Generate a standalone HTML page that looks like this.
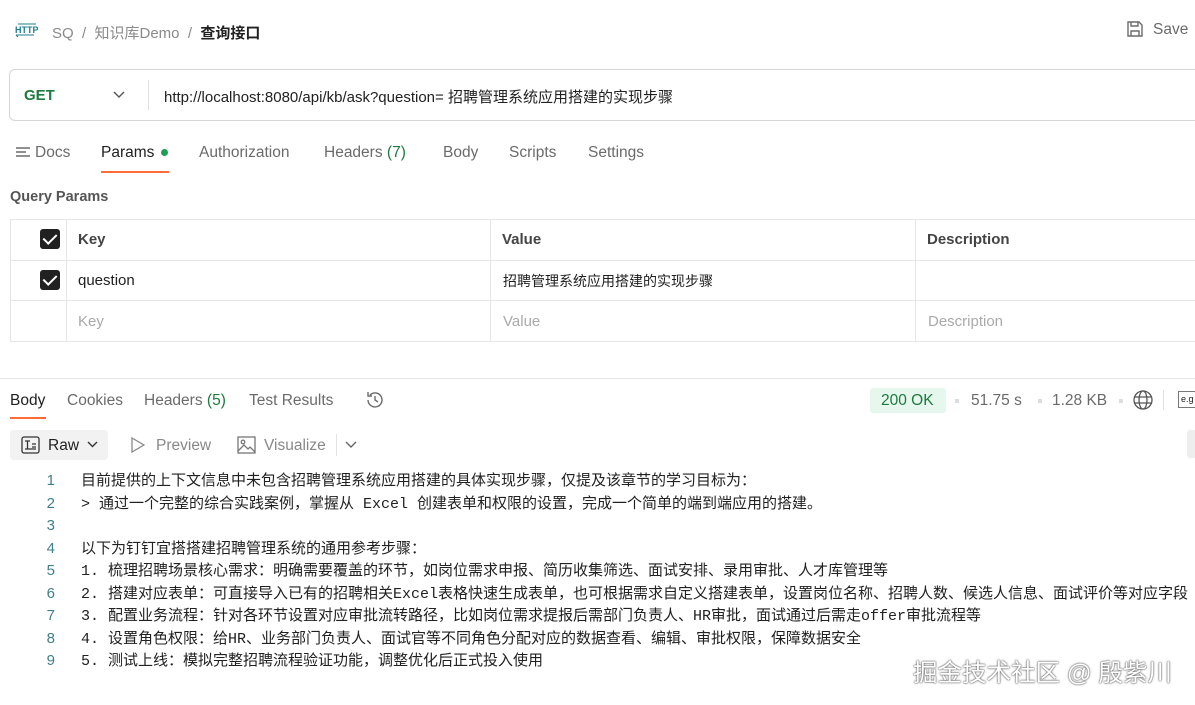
<!DOCTYPE html><html><head><meta charset="utf-8"><style>
*{box-sizing:border-box;margin:0;padding:0}
body{width:1195px;height:705px;overflow:hidden;background:#fff;font-family:"Liberation Sans","Noto Sans CJK SC",sans-serif;color:#212121;position:relative;font-size:15px}
.a{position:absolute;white-space:nowrap}
.g{color:#6b6b6b}
.cell{position:absolute;border:1px solid #e6e6e6}
.cb{position:absolute;width:20px;height:20px;background:#212121;border-radius:3px}
.cb:after{content:"";position:absolute;left:6px;top:2px;width:6px;height:11px;border:solid #fff;border-width:0 2.5px 2.5px 0;transform:rotate(45deg)}
.code{position:absolute;left:0;top:470px;font-family:"Liberation Mono","Noto Sans CJK SC",monospace;font-size:15px;line-height:22.5px}
.code div{white-space:pre;height:22.5px;overflow:visible}
.code span{display:inline-block;width:81px;text-align:right;color:#3f7f8a;padding-right:26px;font-family:"Liberation Sans",sans-serif}
</style></head><body>
<svg class="a" style="left:14px;top:21px" width="24" height="18" viewBox="0 0 24 18"><text x="1" y="12" font-size="9" font-family="Liberation Sans" fill="#1f7f8a" font-weight="bold">HTTP</text><path d="M2 14h18M4 16l-2-2" stroke="#1f7f8a" fill="none"/><path d="M4 3h18" stroke="#1f7f8a"/></svg>
<div class="a g" style="left:52px;top:22px;font-size:15px;color:#8a8a8a">SQ &nbsp;/&nbsp; 知识库Demo &nbsp;/&nbsp; <b style="color:#212121">查询接口</b></div>
<svg class="a" style="left:1126px;top:20px" width="18" height="18" viewBox="0 0 18 18" fill="none" stroke="#6b6b6b" stroke-width="1.4"><path d="M2 2h11l3 3v11H2z"/><path d="M5 2v4h7V2M5 16v-5h8v5"/></svg>
<div class="a g" style="left:1153px;top:21px;font-size:15.5px">Save</div>
<div class="a" style="left:9px;top:69px;width:1200px;height:52px;border:1px solid #d6d6d6;border-radius:6px"></div>
<div class="a" style="left:24px;top:87px;color:#1e7a3e;font-weight:bold;font-size:15px">GET</div>
<svg class="a" style="left:113px;top:91px" width="12" height="8"><path d="M1 1l5 5 5-5" stroke="#555" fill="none" stroke-width="1.4"/></svg>
<div class="a" style="left:148px;top:80px;width:1px;height:30px;background:#e2e2e2"></div>
<div class="a" style="left:164px;top:86px">http://localhost:8080/api/kb/ask?question= 招聘管理系统应用搭建的实现步骤</div>
<svg class="a" style="left:16px;top:147px" width="14" height="12"><path d="M0 1h14M0 5h10M0 9h14" stroke="#6b6b6b" stroke-width="1.4"/></svg>
<div class="a g" style="left:35px;top:144px;font-size:15.5px">Docs</div>
<div class="a" style="left:101px;top:144px;font-size:15.5px">Params</div>
<div class="a" style="left:161px;top:149px;width:7px;height:7px;border-radius:50%;background:#1f9d55"></div>
<div class="a" style="left:101px;top:171px;width:68px;height:2px;background:#ff6c37"></div>
<div class="a g" style="left:199px;top:144px;font-size:15.5px">Authorization</div>
<div class="a g" style="left:324px;top:144px;font-size:15.5px">Headers <span style="color:#1e7a3e">(7)</span></div>
<div class="a g" style="left:443px;top:144px;font-size:15.5px">Body</div>
<div class="a g" style="left:509px;top:144px;font-size:15.5px">Scripts</div>
<div class="a g" style="left:588px;top:144px;font-size:15.5px">Settings</div>
<div class="a" style="left:10px;top:189px;font-weight:bold;color:#555;font-size:14.5px">Query Params</div>
<div class="cell" style="left:10px;top:219px;width:57px;height:42px"></div>
<div class="cell" style="left:66px;top:219px;width:425px;height:42px"></div>
<div class="cell" style="left:490px;top:219px;width:426px;height:42px"></div>
<div class="cell" style="left:915px;top:219px;width:290px;height:42px"></div>
<div class="cell" style="left:10px;top:260px;width:57px;height:41px"></div>
<div class="cell" style="left:66px;top:260px;width:425px;height:41px"></div>
<div class="cell" style="left:490px;top:260px;width:426px;height:41px"></div>
<div class="cell" style="left:915px;top:260px;width:290px;height:41px"></div>
<div class="cell" style="left:10px;top:300px;width:57px;height:42px"></div>
<div class="cell" style="left:66px;top:300px;width:425px;height:42px"></div>
<div class="cell" style="left:490px;top:300px;width:426px;height:42px"></div>
<div class="cell" style="left:915px;top:300px;width:290px;height:42px"></div>
<div class="cb" style="left:40px;top:229px"></div><div class="cb" style="left:40px;top:270px"></div>
<div class="a" style="left:78px;top:231px;font-weight:bold;color:#444">Key</div>
<div class="a" style="left:502px;top:231px;font-weight:bold;color:#444">Value</div>
<div class="a" style="left:927px;top:231px;font-weight:bold;color:#444">Description</div>
<div class="a" style="left:78px;top:272px">question</div>
<div class="a" style="left:503px;top:271px;font-size:14px">招聘管理系统应用搭建的实现步骤</div>
<div class="a" style="left:78px;top:313px;color:#aaa">Key</div>
<div class="a" style="left:503px;top:313px;color:#aaa">Value</div>
<div class="a" style="left:928px;top:313px;color:#aaa">Description</div>
<div class="a" style="left:0;top:378px;width:1195px;height:1px;background:#e6e6e6"></div>
<div class="a" style="left:10px;top:392px;font-size:15.5px">Body</div>
<div class="a" style="left:10px;top:417px;width:36px;height:2px;background:#ff6c37"></div>
<div class="a g" style="left:67px;top:392px;font-size:15.5px">Cookies</div>
<div class="a g" style="left:144px;top:392px;font-size:15.5px">Headers <span style="color:#1e7a3e">(5)</span></div>
<div class="a g" style="left:249px;top:392px;font-size:15.5px">Test Results</div>
<svg class="a" style="left:365px;top:390px" width="20" height="20" fill="none" stroke="#6b6b6b" stroke-width="1.4"><path d="M3 10a7 7 0 1 0 2-5M3 2v4h4M10 6v4l3 2"/></svg>
<div class="a" style="left:870px;top:388px;width:76px;height:25px;background:#e6f7ee;border-radius:3px"></div>
<div class="a" style="left:881px;top:392px;color:#1e7a3e;font-size:15.5px">200 OK</div>
<div class="a" style="left:955px;top:399px;width:4px;height:4px;background:#ddd"></div>
<div class="a g" style="left:971px;top:392px;font-size:15.5px">51.75 s</div>
<div class="a" style="left:1038px;top:399px;width:4px;height:4px;background:#ddd"></div>
<div class="a g" style="left:1052px;top:392px;font-size:15.5px">1.28 KB</div>
<div class="a" style="left:1119px;top:399px;width:4px;height:4px;background:#ddd"></div>
<svg class="a" style="left:1133px;top:390px" width="20" height="20" fill="none" stroke="#555" stroke-width="1.3"><circle cx="10" cy="10" r="9"/><ellipse cx="10" cy="10" rx="4" ry="9"/><path d="M1 7h18M1 13h18"/></svg>
<div class="a" style="left:1163px;top:390px;width:1px;height:20px;background:#e2e2e2"></div>
<div class="a" style="left:1178px;top:391px;width:20px;height:17px;border:1px solid #777;font-size:9px;padding:2px">e.g</div>
<div class="a" style="left:10px;top:430px;width:98px;height:30px;background:#f2f2f2;border-radius:4px"></div>
<svg class="a" style="left:21px;top:436px" width="19" height="18" fill="none" stroke="#333" stroke-width="1.3"><rect x="1" y="1" width="17" height="16" rx="2"/><path d="M4 5h5M6.5 5v8M11 8h4M11 11h4M4 13h11"/></svg>
<div class="a" style="left:48px;top:437px;font-size:15.5px">Raw</div>
<svg class="a" style="left:87px;top:441px" width="11" height="7"><path d="M1 1l4.5 4.5L10 1" stroke="#333" fill="none" stroke-width="1.4"/></svg>
<svg class="a" style="left:131px;top:437px" width="14" height="16"><path d="M1 1l12 7-12 7z" stroke="#888" fill="none" stroke-width="1.3"/></svg>
<div class="a" style="left:156px;top:437px;color:#888;font-size:15.5px">Preview</div>
<svg class="a" style="left:237px;top:436px" width="19" height="18" fill="none" stroke="#777" stroke-width="1.3"><rect x="1" y="1" width="17" height="16"/><circle cx="6" cy="6" r="1.8"/><path d="M1 15l6-6 4 4 2-2 5 5"/></svg>
<div class="a" style="left:264px;top:437px;color:#888;font-size:15.5px">Visualize</div>
<div class="a" style="left:336px;top:434px;width:1px;height:22px;background:#e2e2e2"></div>
<svg class="a" style="left:345px;top:441px" width="12" height="7"><path d="M1 1l5 5 5-5" stroke="#666" fill="none" stroke-width="1.4"/></svg>
<div class="a" style="left:1187px;top:430px;width:10px;height:28px;background:#eee;border-radius:3px"></div>
<div class="code">
<div><span>1</span>目前提供的上下文信息中未包含招聘管理系统应用搭建的具体实现步骤，仅提及该章节的学习目标为：</div>
<div><span>2</span>&gt; 通过一个完整的综合实践案例，掌握从 Excel 创建表单和权限的设置，完成一个简单的端到端应用的搭建。</div>
<div><span>3</span></div>
<div><span>4</span>以下为钉钉宜搭搭建招聘管理系统的通用参考步骤：</div>
<div><span>5</span>1. 梳理招聘场景核心需求：明确需要覆盖的环节，如岗位需求申报、简历收集筛选、面试安排、录用审批、人才库管理等</div>
<div><span>6</span>2. 搭建对应表单：可直接导入已有的招聘相关Excel表格快速生成表单，也可根据需求自定义搭建表单，设置岗位名称、招聘人数、候选人信息、面试评价等对应字段</div>
<div><span>7</span>3. 配置业务流程：针对各环节设置对应审批流转路径，比如岗位需求提报后需部门负责人、HR审批，面试通过后需走offer审批流程等</div>
<div><span>8</span>4. 设置角色权限：给HR、业务部门负责人、面试官等不同角色分配对应的数据查看、编辑、审批权限，保障数据安全</div>
<div><span>9</span>5. 测试上线：模拟完整招聘流程验证功能，调整优化后正式投入使用</div>
</div>
<div class="a" style="left:913px;top:654px;font-size:24.5px;color:#fff;text-shadow:0 0 2px #555,0 0 1px #333">掘金技术社区 @ 殷紫川</div>
</body></html>
